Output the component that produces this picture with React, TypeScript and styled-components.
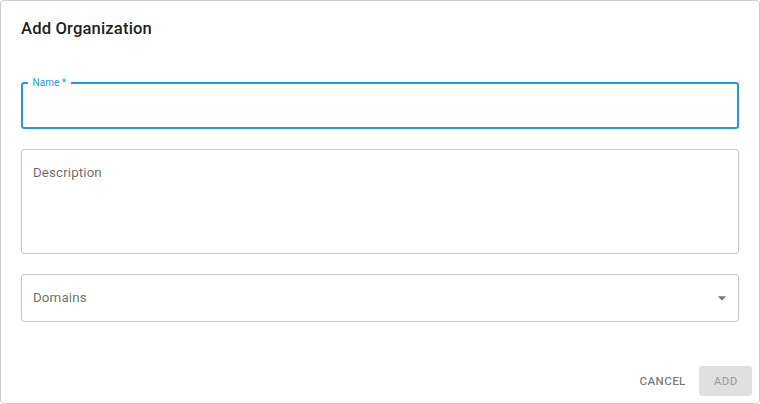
import React from "react";
import styled, { createGlobalStyle } from "styled-components";

const GlobalStyle = createGlobalStyle`
  html, body {
    margin: 0;
    padding: 0;
    background: #ffffff;
  }
  body {
    font-family: Roboto, "Liberation Sans", Arial, sans-serif;
    -webkit-font-smoothing: antialiased;
  }
  * {
    box-sizing: border-box;
  }
`;

const Dialog = styled.div`
  width: 760px;
  height: 404px;
  border: 1px solid #cdcdcd;
  border-radius: 4px;
  background: #ffffff;
  display: flex;
  flex-direction: column;
  overflow: hidden;
`;

const Title = styled.h2`
  margin: 0;
  padding: 15px 20px 11.67px;
  font-family: Roboto, "Liberation Sans", Arial, sans-serif;
  font-weight: 500;
  font-size: 16.67px;
  line-height: 1.6;
  letter-spacing: 0.0075em;
  color: rgba(0, 0, 0, 0.9);
`;

const Content = styled.div`
  flex: 1;
  display: flex;
  flex-direction: column;
  gap: 20px;
  padding: 27.67px 20px 0;
`;

const Outline = styled.div<{ $height: number; $focused?: boolean; $multiline?: boolean }>`
  position: relative;
  height: ${(p) => p.$height}px;
  border: ${(p) => (p.$focused ? "2px solid #2196f3" : "1px solid rgba(0, 0, 0, 0.23)")};
  border-radius: 3.33px;
  display: flex;
  align-items: ${(p) => (p.$multiline ? "flex-start" : "center")};
  justify-content: space-between;
  padding: ${(p) =>
    p.$focused ? "0 10.67px" : p.$multiline ? "13.33px 11px 0" : "0 6px 0 11px"};
`;

const FloatingLabel = styled.span`
  position: absolute;
  left: 4.5px;
  top: -8px;
  padding: 0 5px;
  background: #ffffff;
  font-size: 10px;
  line-height: 14px;
  letter-spacing: 0.00938em;
  color: #2196f3;
`;

const Placeholder = styled.span`
  font-size: 13.33px;
  line-height: 19.2px;
  letter-spacing: 0.00938em;
  color: rgba(0, 0, 0, 0.6);
`;

const ArrowIcon = styled.svg`
  width: 20px;
  height: 20px;
  fill: rgba(0, 0, 0, 0.54);
  flex-shrink: 0;
`;

const Actions = styled.div`
  display: flex;
  justify-content: flex-end;
  align-items: center;
  gap: 6.67px;
  padding: 6.67px;
`;

const Button = styled.button<{ $contained?: boolean }>`
  min-width: 53.33px;
  height: 30px;
  padding: ${(p) => (p.$contained ? "0 13.33px" : "0 6.67px")};
  border: none;
  border-radius: 3.33px;
  background: ${(p) => (p.$contained ? "rgba(0, 0, 0, 0.12)" : "transparent")};
  font-family: Roboto, "Liberation Sans", Arial, sans-serif;
  font-weight: 500;
  font-size: 11.67px;
  letter-spacing: 0.02857em;
  text-transform: uppercase;
  color: ${(p) => (p.$contained ? "rgba(0, 0, 0, 0.3)" : "rgba(0, 0, 0, 0.54)")};
  cursor: ${(p) => (p.$contained ? "default" : "pointer")};
`;

export default function App() {
  return (
    <>
      <GlobalStyle />
      <Dialog>
        <Title>Add Organization</Title>
        <Content>
          <Outline $height={47} $focused>
            <FloatingLabel>Name&thinsp;*</FloatingLabel>
          </Outline>
          <Outline $height={105} $multiline>
            <Placeholder>Description</Placeholder>
          </Outline>
          <Outline $height={48}>
            <Placeholder>Domains</Placeholder>
            <ArrowIcon viewBox="0 0 24 24" aria-hidden="true">
              <path d="M7 10l5 5 5-5z" />
            </ArrowIcon>
          </Outline>
        </Content>
        <Actions>
          <Button>Cancel</Button>
          <Button $contained disabled>
            Add
          </Button>
        </Actions>
      </Dialog>
    </>
  );
}
